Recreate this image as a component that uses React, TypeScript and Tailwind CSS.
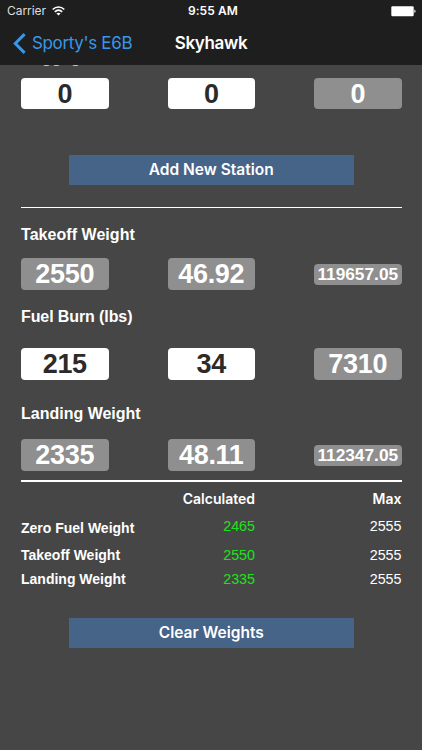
type FieldProps = { value: string; editable?: boolean; small?: boolean }

type Limit = { label: string; calculated: string; max: string; row: string; offset: string }

const limits: Limit[] = [
  { label: 'Zero Fuel Weight', calculated: '2465', max: '2555', row: 'h-[29px]', offset: 'pt-[2px]' },
  { label: 'Takeoff Weight', calculated: '2550', max: '2555', row: 'h-[24px]', offset: 'pt-0' },
  { label: 'Landing Weight', calculated: '2335', max: '2555', row: 'h-[25px]', offset: 'pt-0' },
]

function StatusBar() {
  return (
    <div className="grid h-[22px] grid-cols-3 items-center pl-[7px] pr-[6px] font-['Inter',sans-serif] text-[12px] text-white">
      <span className="flex items-center gap-[6px] text-[#dedede]">
        <span className="tracking-[-0.05px]">Carrier</span>
        <svg width="13" height="10" viewBox="0 0 13 10" fill="none" stroke="#fff" strokeWidth="1.6">
          <path d="M.7 3.5C4 .1 9 .1 12.3 3.5" />
          <path d="M2.8 5.8c2.2-2.1 5.2-2.1 7.4 0" />
          <path d="M6.5 9.6 4.4 7.5c1.2-1.1 3-1.1 4.2 0Z" fill="#fff" stroke="none" />
        </svg>
      </span>
      <span className="whitespace-nowrap pl-[3px] text-center font-semibold tracking-[0.1px]">9:55 AM</span>
      <svg className="ml-auto" width="25" height="11" viewBox="0 0 25 11" fill="#fff">
        <rect x=".3" y=".2" width="22.4" height="10" rx="1.2" />
        <path d="M23.4 3.6c1.6.4 1.6 3 0 3.4Z" />
      </svg>
    </div>
  )
}

function NavBar() {
  return (
    <div className="grid h-[43px] grid-cols-[1fr_auto_1fr] items-center font-['Inter',sans-serif] text-[17px]">
      <a href="#" className="flex items-center gap-[6px] pl-[13px] text-[#3897e8]">
        <svg width="13" height="21" viewBox="0 0 13 21" fill="none" stroke="currentColor" strokeWidth="3">
          <path d="m11.6 1.1-9.3 9.4 9.3 9.4" />
        </svg>
        <span className="whitespace-nowrap tracking-[-0.35px]">Sporty's E6B</span>
      </a>
      <h1 className="font-semibold tracking-[-0.35px] text-white">Skyhawk</h1>
    </div>
  )
}

function Field({ value, editable, small }: FieldProps) {
  return (
    <div
      className={
        'flex w-[87.5px] items-center justify-center rounded-[4px] font-bold ' +
        (editable ? 'bg-white text-[#2b2b2b] ' : 'bg-[#8f8f8f] text-white ') +
        (small ? 'h-[21px] pt-px text-[17.3px]' : 'h-full pt-px text-[27px] tracking-[-0.3px]')
      }
    >
      <span className="leading-none">{value}</span>
    </div>
  )
}

function FieldRow({ fields, className = 'h-[32px]' }: { fields: FieldProps[]; className?: string }) {
  return (
    <div className={'flex items-center justify-between ' + className}>
      {fields.map((f, i) => (
        <Field key={i} {...f} />
      ))}
    </div>
  )
}

function ActionButton({ label }: { label: string }) {
  return (
    <button className="mx-auto block h-[30px] w-[285px] bg-[#466388] font-['Inter',sans-serif] text-[15.5px] font-semibold leading-[30px] text-white">
      {label}
    </button>
  )
}

export default function App() {
  return (
    <div className="flex h-[750px] w-[422px] flex-col overflow-hidden bg-[#464646] font-['Liberation_Sans',Arial,sans-serif] text-white">
      <header className="h-[65px] shrink-0 bg-[#1e1e1e]">
        <StatusBar />
        <NavBar />
      </header>

      <main className="h-[685px] overflow-hidden pl-[21px] pr-[20.5px]">
        {/* scrolled up under the nav bar */}
        <h2 className="-mt-4 h-[29px] text-[16px] font-bold leading-[18px] tracking-[0.15px] text-[#c4c4c4]">Baggage</h2>
        <FieldRow
          className="h-[31px]"
          fields={[{ value: '0', editable: true }, { value: '0', editable: true }, { value: '0' }]}
        />
        <div className="mt-[46px]">
          <ActionButton label="Add New Station" />
        </div>

        <hr className="mt-[22px] border-t border-white" />

        <h2 className="mt-[18px] text-[16px] font-bold leading-[18px] tracking-[0.05px]">Takeoff Weight</h2>
        <div className="mt-[14px]">
          <FieldRow fields={[{ value: '2550' }, { value: '46.92' }, { value: '119657.05', small: true }]} />
        </div>

        <h2 className="mt-[18px] text-[16px] font-bold leading-[18px] tracking-[-0.1px]">Fuel Burn (lbs)</h2>
        <div className="mt-[22px]">
          <FieldRow
            fields={[{ value: '215', editable: true }, { value: '34', editable: true }, { value: '7310' }]}
          />
        </div>

        <h2 className="mt-[25px] text-[16px] font-bold leading-[18px]">Landing Weight</h2>
        <div className="mt-4">
          <FieldRow fields={[{ value: '2335' }, { value: '48.11' }, { value: '112347.05', small: true }]} />
        </div>

        <hr className="mt-[9px] border-t-2 border-white" />

        <div className="mt-[9px] text-[14px] leading-[16px]">
          <div className="grid h-[27px] grid-cols-[1fr_88px_146.5px] text-right font-['Inter',sans-serif] font-semibold">
            <span />
            <span>Calculated</span>
            <span>Max</span>
          </div>
          {limits.map((l) => (
            <div key={l.label} className={'grid grid-cols-[1fr_88px_146.5px] items-start text-right ' + l.row}>
              <span className={'text-left font-bold ' + l.offset}>{l.label}</span>
              <span className="text-[14.3px] text-[#1ae31a]">{l.calculated}</span>
              <span className="text-[14.3px]">{l.max}</span>
            </div>
          ))}
        </div>

        <div className="mt-[22px]">
          <ActionButton label="Clear Weights" />
        </div>
      </main>
    </div>
  )
}
